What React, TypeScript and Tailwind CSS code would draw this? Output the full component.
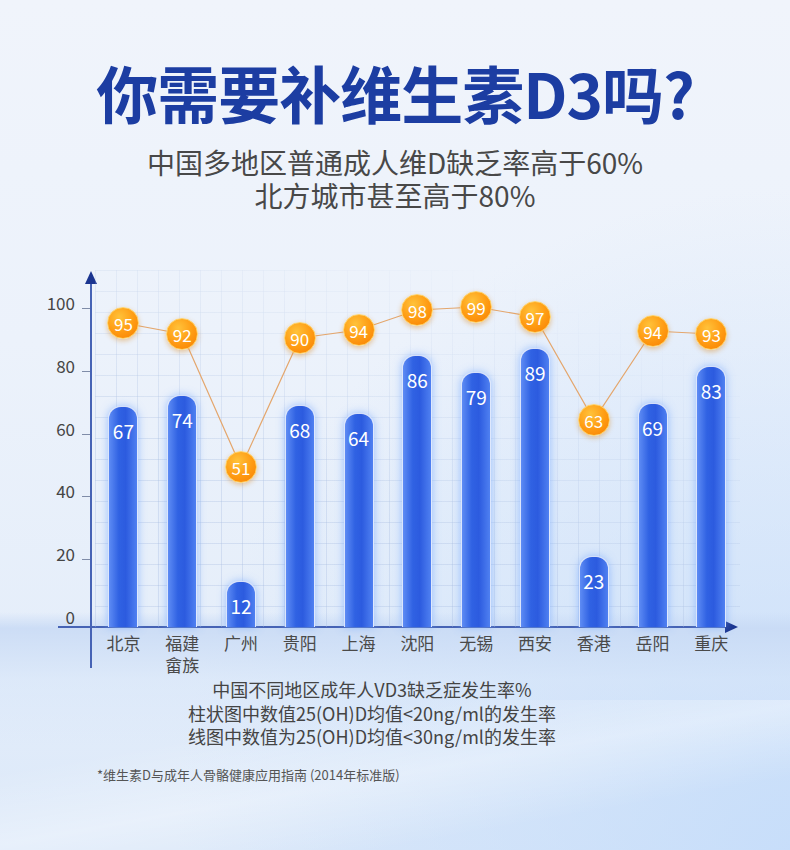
import React from "react";

type Item = {
    name: string[];
    value: number;
    top: number;
    rate: number;
    dotY: number;
};

const items: Item[] = [
    { name: ["北京"], value: 67, top: 406, rate: 95, dotY: 323 },
    { name: ["福建", "畲族"], value: 74, top: 395, rate: 92, dotY: 334 },
    { name: ["广州"], value: 12, top: 581, rate: 51, dotY: 467 },
    { name: ["贵阳"], value: 68, top: 405, rate: 90, dotY: 338 },
    { name: ["上海"], value: 64, top: 413, rate: 94, dotY: 330 },
    { name: ["沈阳"], value: 86, top: 355, rate: 98, dotY: 310 },
    { name: ["无锡"], value: 79, top: 372, rate: 99, dotY: 307 },
    { name: ["西安"], value: 89, top: 348, rate: 97, dotY: 317 },
    { name: ["香港"], value: 23, top: 556, rate: 63, dotY: 420 },
    { name: ["岳阳"], value: 69, top: 403, rate: 94, dotY: 331 },
    { name: ["重庆"], value: 83, top: 366, rate: 93, dotY: 334 },
];

// plot area: page y 270 .. 627 (x axis)
const PLOT_Y = 270;
const AXIS_Y = 627;
const COL = 58.8;
const PAD = 4;
const cx = (i: number) => PAD + COL * i + COL / 2;

const yLabels = ["100", "80", "60", "40", "20", "0"];

const font = "font-['Noto_Sans_CJK_SC','Noto_Sans',sans-serif]";

function Plot() {
    const points = items.map((it, i) => `${cx(i)},${it.dotY - PLOT_Y}`).join(" ");

    return (
        <div className="relative flex-1">
            {/* faint grid */}
            <div className="absolute left-[5px] top-0 w-[645px] h-full bg-[linear-gradient(to_right,rgba(170,190,225,0.35)_1px,transparent_1px),linear-gradient(to_bottom,rgba(170,190,225,0.35)_1px,transparent_1px)] bg-[size:21px_21px] [mask-image:linear-gradient(200deg,transparent_15%,black_65%)]" />

            <div className="relative flex items-end h-full pl-[4px]">
                {items.map((it) => (
                    <div key={it.name[0]} className="w-[58.8px] flex justify-center">
                        <div
                            className="w-[30px] rounded-t-[13px] border border-b-0 border-white/80 bg-[linear-gradient(90deg,#5e8cf4_0%,#3062e3_35%,#2c5bdf_60%,#4f80f1_100%)] shadow-[0_0_8px_rgba(120,170,255,0.7)] flex justify-center"
                            style={{ height: AXIS_Y - it.top }}
                        >
                            <span className="mt-[12px] text-[19px] leading-[24px] text-white">{it.value}</span>
                        </div>
                    </div>
                ))}
            </div>

            {/* rate line and points */}
            <svg className="absolute left-0 top-0" width="700" height="357">
                <polyline points={points} fill="none" stroke="#e4a66c" strokeWidth="1.2" />
            </svg>
            {items.map((it, i) => (
                <div
                    key={`d${it.name[0]}`}
                    className="absolute w-[32px] h-[32px] rounded-full border-[1.5px] border-[#ffd36a] bg-[radial-gradient(circle_at_38%_30%,#ffc23a_0%,#ff9d14_50%,#f77e00_100%)] shadow-[0_2px_5px_rgba(220,140,40,0.45)] flex items-center justify-center text-[17px] leading-none text-white"
                    style={{ left: cx(i) - 16, top: it.dotY - PLOT_Y - 16 }}
                >
                    {it.rate}
                </div>
            ))}
        </div>
    );
}

function Chart() {
    return (
        <div className="relative h-[418px] pt-[10px]">
            {/* axes */}
            <div className="absolute left-[90px] top-[20px] w-[1.5px] h-[388px] bg-[#4663b5]" />
            <svg className="absolute left-[85px] top-[11px]" width="12" height="13" viewBox="0 0 12 13">
                <polygon points="6,0 12,13 0,13" fill="#1b3590" />
            </svg>
            <div className="absolute left-[58px] top-[366px] w-[670px] h-[1.5px] bg-[#4663b5]" />
            <svg className="absolute left-[725px] top-[361px]" width="13" height="12" viewBox="0 0 13 12">
                <polygon points="0,0 13,6 0,12" fill="#1b3590" />
            </svg>

            <div className="flex h-[357px]">
                <div className="w-[75px] flex flex-col items-end pt-[21px] gap-[38.8px] text-[17px] leading-[24px] text-[#454545]">
                    {yLabels.map((l) => (
                        <div key={l} className="h-[24px]">{l}</div>
                    ))}
                </div>
                <div className="w-[15px] flex flex-col items-end pt-[38px] gap-[61.8px]">
                    {yLabels.slice(0, 5).map((l) => (
                        <div key={l} className="w-[8px] h-px bg-[#7f8ca8]" />
                    ))}
                </div>
                <Plot />
            </div>

            <div className="flex mt-[5px] pl-[94px] text-[17px] leading-[22px] text-[#4a4a4a]">
                {items.map((it) => (
                    <div key={it.name[0]} className="w-[58.8px] flex flex-col items-center">
                        {it.name.map((n) => (
                            <div key={n}>{n}</div>
                        ))}
                    </div>
                ))}
            </div>
        </div>
    );
}

export default function App() {
    return (
        <div
            className={`relative w-[790px] h-[850px] overflow-hidden bg-[linear-gradient(180deg,#f0f4fb_0%,#ecf2fb_40%,#e5eefa_75%,#dbe8f9_100%)] ${font}`}
        >
            <div className="absolute inset-0 bg-[radial-gradient(ellipse_at_100%_100%,rgba(196,220,250,0.85),transparent_55%)]" />
            <div className="absolute left-0 top-[612px] w-[790px] h-[135px] bg-[linear-gradient(180deg,rgba(200,218,245,0)_0%,rgba(200,218,245,0.85)_12%,rgba(214,229,249,0.5)_50%,rgba(255,255,255,0)_100%)]" />
            <div className="absolute left-0 top-[700px] w-[790px] h-[150px] bg-[linear-gradient(170deg,rgba(255,255,255,0)_25%,rgba(255,255,255,0.35)_50%,rgba(255,255,255,0)_75%)]" />

            <div className="relative">
                <div className="h-[260px] flex flex-col items-center">
                    <h1 className="mt-[58px] text-[62px] leading-[68px] font-bold text-[#1c3da2] tracking-[-1px]">
                        你需要补维生素D3吗?
                    </h1>
                    <div className="mt-[20px] text-center text-[28px] leading-[33px] text-[#484848]">
                        <div>中国多地区普通成人维D缺乏率高于60%</div>
                        <div>北方城市甚至高于80%</div>
                    </div>
                </div>

                <Chart />

                <div className="pr-[46px] text-center text-[18px] leading-[23.5px] text-[#444]">
                    <div>中国不同地区成年人VD3缺乏症发生率%</div>
                    <div>柱状图中数值25(OH)D均值&lt;20ng/ml的发生率</div>
                    <div>线图中数值为25(OH)D均值&lt;30ng/ml的发生率</div>
                </div>

                <div className="mt-[17px] pl-[97px] text-[13px] leading-[18px] text-[#555]">
                    *维生素D与成年人骨骼健康应用指南 (2014年标准版)
                </div>
            </div>
        </div>
    );
}
